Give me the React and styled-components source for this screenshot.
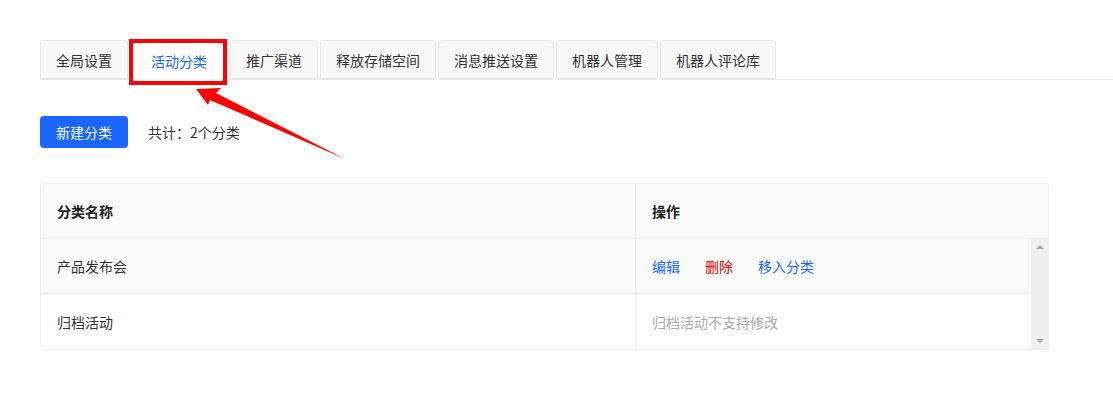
import React from "react";
import styled, { createGlobalStyle } from "styled-components";

const GlobalStyle = createGlobalStyle`
    body{
        margin: 0;
        background: #fff;
        font-family: "Noto Sans CJK SC", "Noto Sans", sans-serif;
        color: #333;
    }
`;

const Page = styled.div`
    position: relative;
    width: 1113px;
    height: 410px;
    padding: 40px 0 0 40px;
    box-sizing: border-box;
    overflow: hidden;
`;

// PESTAÑAS
const TabBar = styled.div`
    display: flex;
    align-items: flex-end;
    gap: 2px;
    height: 40px;
    box-sizing: border-box;
    border-bottom: 1px solid #e8e8e8;
`;

const Tab = styled.div`
    position: relative;
    display: flex;
    align-items: center;
    height: ${p => p.$active ? "40px" : "39px"};
    margin-bottom: ${p => p.$active ? "-1px" : "0"};
    padding: 0 ${p => p.$active ? "20px" : "15px"};
    box-sizing: border-box;
    font-size: 14px;
    color: ${p => p.$active ? "#1a66ff" : "#333"};
    background: ${p => p.$active ? "#fff" : "#f8f8f8"};
    border: 1px solid #e8e8e8;
    border-bottom: ${p => p.$active ? "none" : "1px solid #e8e8e8"};
    border-radius: 4px 4px 0 0;
    white-space: nowrap;
`;

const Highlight = styled.span`
    position: absolute;
    left: -2px;
    top: -2px;
    width: 98px;
    height: 46px;
    box-sizing: border-box;
    border: 4px solid #ff0000;
    pointer-events: none;
`;

const Arrow = styled.svg`
    position: absolute;
    left: 0;
    top: 0;
    pointer-events: none;
`;

// BARRA DE ACCIONES
const Toolbar = styled.div`
    display: flex;
    align-items: center;
    gap: 20px;
    margin-top: 36px;
`;

const PrimaryButton = styled.button`
    width: 88px;
    height: 32px;
    border: none;
    border-radius: 4px;
    background: #1a66ff;
    color: #fff;
    font-family: inherit;
    font-size: 14px;
    cursor: pointer;
`;

const Count = styled.span`
    font-size: 14px;
    color: #333;
`;

// TABLA
const Table = styled.div`
    width: 1009px;
    margin-top: 35px;
    border: 1px solid #eeeeee;
    border-radius: 3px;
    box-sizing: border-box;
`;

const HeaderRow = styled.div`
    display: grid;
    grid-template-columns: 594px 1fr;
    height: 54px;
    background: #fafafa;
    border-bottom: 1px solid #eeeeee;
`;

const Body = styled.div`
    display: flex;
`;

const Rows = styled.div`
    flex: 1;
`;

const Row = styled.div`
    display: grid;
    grid-template-columns: 594px 1fr;
    height: 55px;
    background: ${p => p.$hover ? "#fafafa" : "#fff"};
    border-bottom: ${p => p.$last ? "none" : "1px solid #eeeeee"};
    box-sizing: border-box;
`;

const Cell = styled.div`
    display: flex;
    align-items: center;
    padding-left: 16px;
    font-size: 14px;
    font-weight: ${p => p.$head ? 700 : 400};
    color: ${p => p.$head ? "#222" : "#333"};
    border-left: ${p => p.$divider ? "1px solid #eeeeee" : "none"};
    gap: 25px;
`;

const Link = styled.span`
    color: ${p => p.$danger ? "#dd0000" : "#1a66ff"};
    cursor: pointer;
`;

const Muted = styled.span`
    color: #aaa;
`;

const Scrollbar = styled.div`
    display: flex;
    flex-direction: column;
    justify-content: space-between;
    align-items: center;
    width: 17px;
    padding: 6px 0;
    box-sizing: border-box;
    background: #f0f0f0;
`;

const ScrollArrow = styled.span`
    width: 0;
    height: 0;
    border-left: 4px solid transparent;
    border-right: 4px solid transparent;
    ${p => p.$down ? "border-top: 4px solid #a3a3a3;" : "border-bottom: 4px solid #a3a3a3;"}
`;

const tabs = ["全局设置", "活动分类", "推广渠道", "释放存储空间", "消息推送设置", "机器人管理", "机器人评论库"];

export default function App() {
    return (
        <>
            <GlobalStyle />
            <Page>
                <TabBar>
                    {tabs.map((t, i) => (
                        <Tab key={t} $active={i === 1}>
                            {t}
                            {i === 1 && <Highlight />}
                        </Tab>
                    ))}
                </TabBar>

                <Toolbar>
                    <PrimaryButton>新建分类</PrimaryButton>
                    <Count>共计：2个分类</Count>
                </Toolbar>

                <Table>
                    <HeaderRow>
                        <Cell $head>分类名称</Cell>
                        <Cell $head $divider>操作</Cell>
                    </HeaderRow>
                    <Body>
                        <Rows>
                            <Row $hover>
                                <Cell>产品发布会</Cell>
                                <Cell $divider>
                                    <Link>编辑</Link>
                                    <Link $danger>删除</Link>
                                    <Link>移入分类</Link>
                                </Cell>
                            </Row>
                            <Row $last>
                                <Cell>归档活动</Cell>
                                <Cell $divider>
                                    <Muted>归档活动不支持修改</Muted>
                                </Cell>
                            </Row>
                        </Rows>
                        <Scrollbar>
                            <ScrollArrow />
                            <ScrollArrow $down />
                        </Scrollbar>
                    </Body>
                </Table>

                <Arrow width="1113" height="410" viewBox="0 0 1113 410">
                    <polygon
                        points="196,89 221,88 216,93 345,159 210,100 208,105"
                        fill="#ff0000"
                    />
                </Arrow>
            </Page>
        </>
    );
}
